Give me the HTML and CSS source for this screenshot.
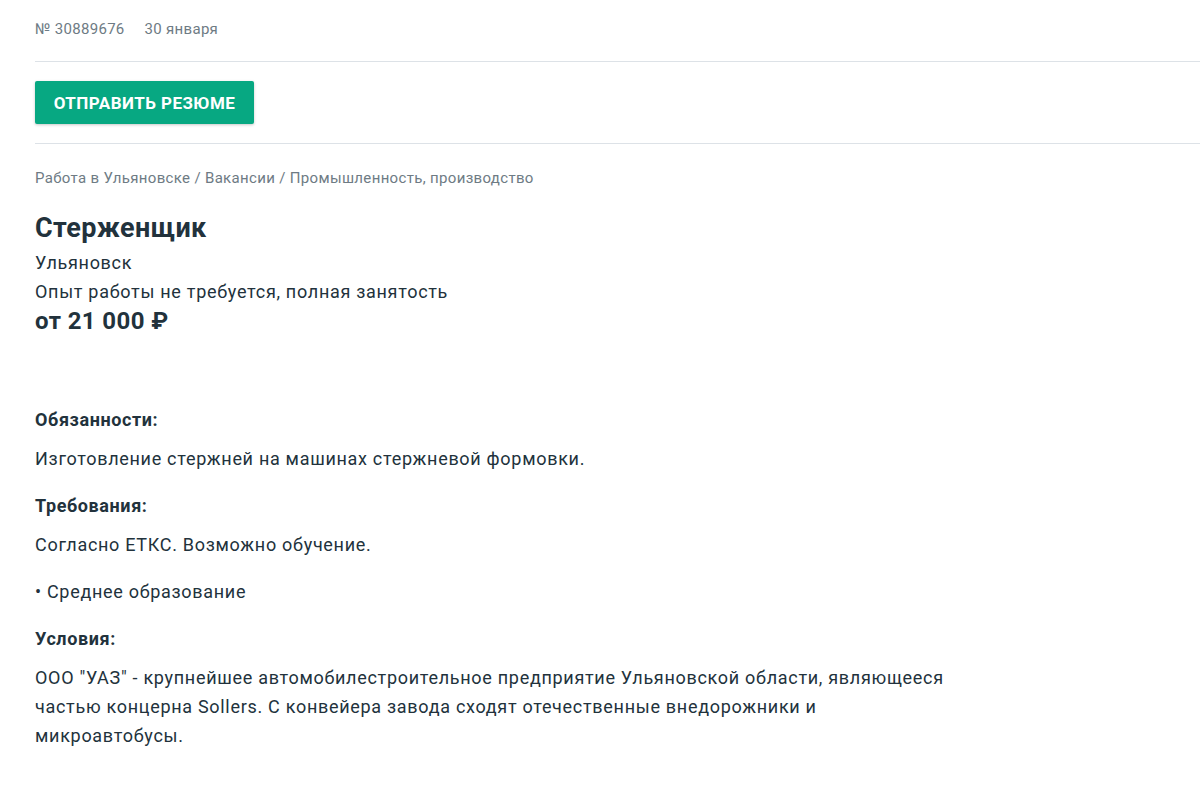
FILE: index.html
```html
<!DOCTYPE html>
<html lang="ru">
<head>
<meta charset="utf-8">
<title>Стерженщик</title>
<link rel="stylesheet" href="styles.css">
</head>
<body>
<div class="page">
  <div class="meta">
    <span class="meta-num">№ 30889676</span>
    <span class="meta-date">30 января</span>
  </div>
  <hr class="divider">
  <div class="actions">
    <button class="btn-primary" type="button">Отправить резюме</button>
  </div>
  <hr class="divider">
  <nav class="breadcrumbs">Работа в Ульяновске / Вакансии / Промышленность, производство</nav>
  <h1 class="title">Стерженщик</h1>
  <div class="info">
    <div class="info-line">Ульяновск</div>
    <div class="info-line">Опыт работы не требуется, полная занятость</div>
    <div class="salary">от 21 000 ₽</div>
  </div>
  <div class="description">
    <h3 class="sec-title">Обязанности:</h3>
    <p class="sec-text">Изготовление стержней на машинах стержневой формовки.</p>
    <h3 class="sec-title">Требования:</h3>
    <p class="sec-text">Согласно ЕТКС. Возможно обучение.</p>
    <p class="sec-text">• Среднее образование</p>
    <h3 class="sec-title">Условия:</h3>
    <p class="sec-text">ООО "УАЗ" - крупнейшее автомобилестроительное предприятие Ульяновской области, являющееся частью концерна Sollers. С конвейера завода сходят отечественные внедорожники и микроавтобусы.</p>
  </div>
</div>
</body>
</html>
```
FILE: styles.css
```css
* { box-sizing: border-box; }
html, body {
  margin: 0;
  padding: 0;
  background: #ffffff;
}
body {
  font-family: Roboto, "Liberation Sans", Arial, sans-serif;
  color: #22323c;
}
.page {
  padding: 19px 0 0 35px;
}
.meta {
  display: flex;
  gap: 20px;
  font-size: 15px;
  line-height: 20px;
  letter-spacing: 0.3px;
  color: #6e7b84;
}
.divider {
  border: 0;
  height: 1px;
  background: #dde2e7;
  margin: 22px 0 19px 0;
}
.actions + .divider { margin: 19px 0 0 0; }
.actions { display: flex; }
.btn-primary {
  height: 43px;
  width: 219px;
  border: 0;
  border-radius: 2px;
  background: #07a882;
  color: #ffffff;
  font-family: Roboto, "Liberation Sans", Arial, sans-serif;
  font-weight: 700;
  font-size: 17px;
  letter-spacing: 0.45px;
  text-transform: uppercase;
  box-shadow: 0 1px 3px rgba(0,0,0,0.22);
  padding: 0;
}
.breadcrumbs {
  margin-top: 24px;
  font-size: 15px;
  line-height: 20px;
  letter-spacing: 0.33px;
  color: #6e7b84;
}
.title {
  margin: 24px 0 0 0;
  font-size: 27px;
  line-height: 32px;
  font-weight: 700;
  letter-spacing: 0.4px;
}
.info {
  margin-top: 4px;
  font-size: 18px;
  line-height: 29px;
  letter-spacing: 0.7px;
}
.salary {
  font-size: 24px;
  font-weight: 700;
  line-height: 30px;
  letter-spacing: 0.4px;
}
.description {
  margin-top: 69px;
  max-width: 920px;
}
.sec-title {
  margin: 0 0 10px 0;
  font-size: 18px;
  line-height: 29px;
  font-weight: 700;
  letter-spacing: 0.6px;
}
.sec-text {
  margin: 0 0 18px 0;
  font-size: 18px;
  line-height: 29px;
  letter-spacing: 0.7px;
}
```
